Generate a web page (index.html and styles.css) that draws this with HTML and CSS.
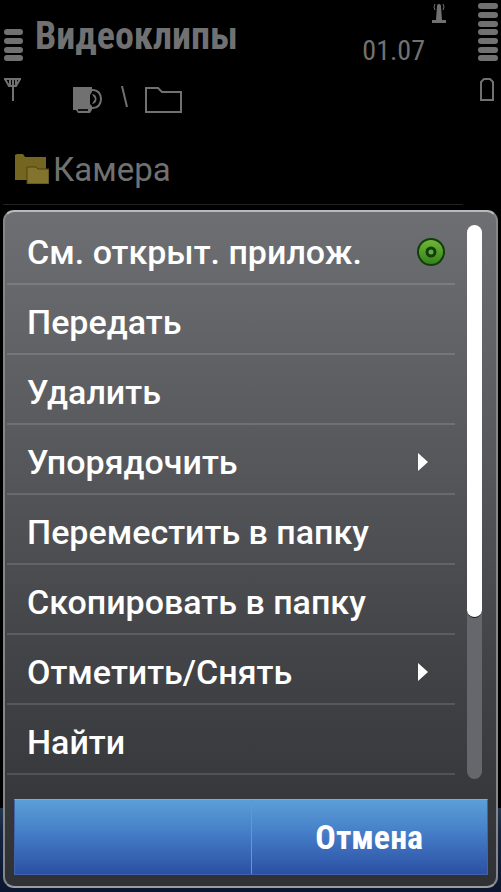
FILE: index.html
```
<!doctype html>
<html lang="ru">

<head>
  <meta charset="UTF-8">
  <meta name="viewport" content="width=device-width, initial-scale=1">
  <title>Видеоклипы</title>
  <link rel="stylesheet" href="styles.css">
</head>

<body>

  <div class="screen">
    <header class="status">
      <svg class="signal" width="20" height="106" viewBox="0 0 20 106">
        <g fill="#717171">
          <rect x="0" y="29" width="19" height="6" rx="3"/>
          <rect x="0" y="38" width="19" height="6" rx="3"/>
          <rect x="0" y="47" width="19" height="6" rx="3"/>
          <rect x="0" y="55" width="19" height="6" rx="3"/>
        </g>
        <path d="M0 79H17M1 79L5 86H12L16 79M9 79V101M6 80V85M12 80V85" fill="none" stroke="#717171" stroke-width="2"/>
      </svg>

      <div class="heading">
        <h1 class="title">Видеоклипы</h1>
        <div class="path">
          <svg width="32" height="28" viewBox="0 0 32 28">
            <path d="M0 1H19V6L17 9V18L19 20V24L17 27H5L3 24H0Z" fill="#717171"/>
            <path d="M19 4C31 3 31 23 19 22" fill="none" stroke="#717171" stroke-width="2"/>
            <path d="M19 8C25 8 25 18 19 18L22 13Z" fill="#717171"/>
            <path d="M5 24H15" stroke="#111" stroke-width="2"/>
          </svg>
          <svg width="8" height="28" viewBox="0 0 8 28">
            <path d="M1 0L6 21" stroke="#717171" stroke-width="2"/>
          </svg>
          <svg width="38" height="28" viewBox="0 0 38 28">
            <path d="M1 2H13L17 6H36V26H1Z" fill="none" stroke="#717171" stroke-width="2"/>
          </svg>
        </div>
      </div>

      <div class="clock">
        <svg width="16" height="20" viewBox="0 0 16 20">
          <path d="M6 3H10L11 17H15V20H1V17H5Z" fill="#717171"/>
          <circle cx="8" cy="3" r="2" fill="#717171"/>
          <path d="M4 1Q2 4 4 7M12 1Q14 4 12 7" fill="none" stroke="#717171" stroke-width="1"/>
        </svg>
        <time class="time">01.07</time>
      </div>

      <svg class="battery" width="20" height="106" viewBox="0 0 20 106">
        <g fill="#717171">
          <rect x="0" y="3" width="20" height="6" rx="3"/>
          <rect x="0" y="12" width="20" height="6" rx="3"/>
          <rect x="0" y="21" width="20" height="6" rx="3"/>
          <rect x="0" y="29" width="20" height="6" rx="3"/>
          <rect x="0" y="38" width="20" height="6" rx="3"/>
          <rect x="0" y="47" width="20" height="6" rx="3"/>
          <rect x="0" y="55" width="20" height="6" rx="3"/>
        </g>
        <path d="M3 100V82L6 79H12L15 82V100Z" fill="none" stroke="#717171" stroke-width="2"/>
      </svg>
    </header>

    <div class="folder">
      <svg width="34" height="30" viewBox="0 0 34 30">
        <path d="M0 1L2 0H8L10 3H31V26H0Z" fill="#746520"/>
        <path d="M12 13H21L23 15H34V30H12Z" fill="#82742d" stroke="#4c4216" stroke-width="1"/>
      </svg>
      <span>Камера</span>
    </div>

    <div class="softkeys"></div>

    <div class="sheet">
      <div class="scroller">
        <ul class="menu">
          <li><button class="item" type="button">См. открыт. прилож.
            <svg width="28" height="28" viewBox="0 0 28 28">
              <defs>
                <linearGradient id="green" x1="0" y1="0" x2="0" y2="1">
                  <stop offset="0" stop-color="#73b83a"/>
                  <stop offset="1" stop-color="#348019"/>
                </linearGradient>
              </defs>
              <circle cx="14" cy="14" r="13" fill="url(#green)" stroke="#103f0a" stroke-width="2"/>
              <circle cx="14" cy="14" r="4" fill="#65a845" stroke="#103f0a" stroke-width="3"/>
            </svg></button></li>
          <li><button class="item" type="button">Передать</button></li>
          <li><button class="item" type="button">Удалить</button></li>
          <li><button class="item submenu" type="button">Упорядочить
            <svg width="10" height="18" viewBox="0 0 10 18"><path d="M0 0L10 9L0 18Z" fill="#fff"/></svg></button></li>
          <li><button class="item" type="button">Переместить в папку</button></li>
          <li><button class="item" type="button">Скопировать в папку</button></li>
          <li><button class="item submenu" type="button">Отметить/Снять
            <svg width="10" height="18" viewBox="0 0 10 18"><path d="M0 0L10 9L0 18Z" fill="#fff"/></svg></button></li>
          <li><button class="item" type="button">Найти</button></li>
        </ul>
        <div class="track"><div class="thumb"></div></div>
      </div>
      <div class="actions">
        <button class="action" type="button" aria-label="Выбрать"></button>
        <button class="action" type="button">Отмена</button>
      </div>
    </div>
  </div>

</body>

</html>
```
FILE: styles.css
```
* {
  box-sizing: border-box;
  margin: 0;
  padding: 0;
}

body {
  background: #000;
  color: #717171;
  font-family: Roboto, "Noto Sans", sans-serif;
}

svg {
  display: block;
  flex: none;
}

button {
  border: 0;
  background: none;
  color: #fff;
  font: inherit;
}

.screen {
  position: relative;
  display: flex;
  flex-direction: column;
  min-height: 100vh;
}

/* status bar */
.status {
  display: flex;
  height: 136px;
  padding: 0 3px 0 4px;
}

.heading {
  flex: 1;
  padding: 14px 0 0 11px;
}

.title {
  font: bold 38px/44px "Roboto Condensed", "Liberation Sans Narrow", sans-serif;
}

.path {
  display: flex;
  gap: 16px;
  padding: 28px 0 0 38px;
}

.clock {
  display: flex;
  flex-direction: column;
  align-items: flex-end;
  gap: 12px;
  padding: 3px 31px 0 0;
}

.time {
  padding-right: 22px;
  font: 28px/32px "Roboto Condensed", "Liberation Sans Narrow", sans-serif;
}

/* folder row under the menu */
.folder {
  display: flex;
  align-items: center;
  gap: 4px;
  height: 69px;
  margin: 0 38px 0 3px;
  padding: 0 0 2px 12px;
  border-bottom: 1px solid #222;
  font-size: 33px;
}

.softkeys {
  height: 84px;
  margin-top: auto;
  background: linear-gradient(#22374f, #14233f 30%, #0b1630);
}

/* options menu */
.sheet {
  position: absolute;
  right: 3px;
  bottom: 4px;
  left: 3px;
  padding: 3px 8px 11px 2px;
  border: 2px solid #85868a;
  border-top-color: #b9babd;
  border-bottom-color: #9b9ca0;
  border-radius: 11px;
  background: linear-gradient(#6e6f73, #5b5c60 30%, #434447 65%, #303134);
}

.scroller {
  display: flex;
  gap: 12px;
  padding-right: 6px;
}

.menu {
  flex: 1;
  list-style: none;
}

.item {
  display: flex;
  align-items: center;
  justify-content: space-between;
  width: 100%;
  height: 70px;
  padding: 6px 10px 0 20px;
  border-bottom: 2px solid rgba(255, 255, 255, .13);
  font-size: 34px;
  font-weight: 500;
  text-align: left;
}

.submenu {
  padding-right: 27px;
}

.track {
  width: 15px;
  margin: 10px 0 -4px;
  border-radius: 8px;
  background: #66666d;
}

.thumb {
  height: 71%;
  border-bottom: 1px solid #111;
  border-radius: 8px;
  background: #fff;
}

.actions {
  display: flex;
  margin: 24px 0 0 7px;
  border: 1px solid #3f64ab;
  border-top-color: #79afdc;
}

.action {
  flex: 1;
  height: 74px;
  background: linear-gradient(#5c9fd8, #4781c9 40%, #2b50a4);
  font: bold 34px/44px "Roboto Condensed", "Liberation Sans Narrow", sans-serif;
}

.action + .action {
  border-left: 1px solid #6795d0;
}
```
